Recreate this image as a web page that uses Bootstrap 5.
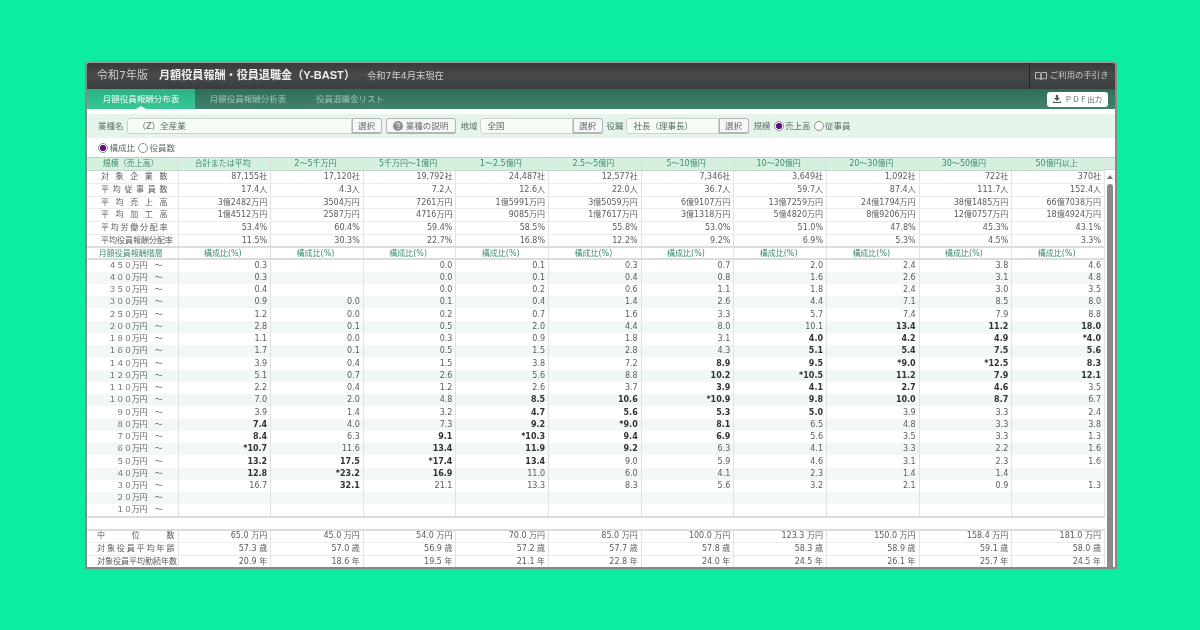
<!DOCTYPE html>
<html lang="ja">
<head>
<meta charset="utf-8">
<title>月額役員報酬・役員退職金（Y-BAST）</title>
<link href="https://cdn.jsdelivr.net/npm/bootstrap@5.3.0/dist/css/bootstrap.min.css" rel="stylesheet">
<style>
html,body{height:630px;overflow:hidden}
body{background:#0ceda3;font-family:"DejaVu Sans","Noto Sans CJK JP",sans-serif;font-size:8px;line-height:1;color:#555;padding:61px 0 0 85px}
.pane{width:1032px;height:508px;background:#fff;border:2px solid #888;border-top-color:#999;border-radius:4px 4px 0 0;overflow:hidden;filter:blur(.3px)}
.hdbar{height:26px;padding-bottom:1px;background:linear-gradient(#383b3d,#47494b 45%,#3a3d3f)}
.hd-a{font-size:11px;color:#c9cccc;margin-left:10px;width:62px}
.hd-b{font-size:11.1px;font-weight:700;color:#eceeee;width:208px;white-space:nowrap;font-family:"Liberation Sans","Noto Sans CJK JP",sans-serif}
.hd-c{font-size:9.3px;color:#c9cccc}
.guide{width:86px;height:26px;border-left:1px solid #222;color:#c3c6c6;font-size:8.4px;gap:3px;padding-left:5px;white-space:nowrap}
.tabbar{height:20px;background:linear-gradient(#2f6d58,#42836c)}
.tabbar .nav-link{height:20px;padding:1px 0 0;font-size:8.5px;color:#9fc2b3;display:flex;align-items:center;justify-content:center;position:relative}
.tabbar .tb1{width:108px;color:#f2fff9;background:linear-gradient(#2bb184,#38c896)}
.tabbar .tb1::after{content:"";position:absolute;left:50%;bottom:0;margin-left:-5px;border:5px solid transparent;border-top:0;border-bottom:3px solid #fff}
.tabbar .tb2{width:90px;margin-left:8px}
.tabbar .tb3{width:114px}
.pdf{margin-right:7px;width:61px;height:15px;padding:0;border-radius:3px;background:#fff;border:0;color:#5d6a64;font-size:7.4px;letter-spacing:.1px;line-height:15px;white-space:nowrap;display:flex;align-items:center;justify-content:center;gap:4px}
.filt{height:24px;margin-top:5px;background:#e6f5e9;padding-left:11px;color:#5a7064;font-size:8.5px}
.fld{height:16px;border-radius:3px 0 0 3px;border:1px solid #ccd3cd;background:#f6fbf6;font-size:8.5px;color:#56705f;padding:0 0 2px 10px;box-shadow:none}
.fld1{width:225px;margin:0 0 0 3px}
.fld2{width:93px;margin-left:2px;padding-left:7px}
.sel{height:16px;width:30px;padding:1px 0 0;border:1px solid #b4b4b4;border-bottom-width:2px;border-radius:0 3px 3px 0;background:#f7f7f7;color:#5f6b65;font-size:8.5px;line-height:1;white-space:nowrap}
.help{width:70px;margin:0 5px 0 4px;border-radius:3px;display:flex;align-items:center;justify-content:center;gap:3px}
.scale-lb{margin:0 3px 0 5px}
.rdo.form-check-input{width:10px;height:10px;margin:0 1.5px 0 0;border:1px solid #8c8c8c;background:#fff;flex:none}
.rdo.form-check-input:checked{background:radial-gradient(#6a0a86 0 2.8px,#fff 3.4px);border-color:#8c8c8c}
.rlabel{margin:0 3px 0 0;color:#5a7064;font-size:8.5px;white-space:nowrap}
.rowsel{height:19px;padding:1px 0 0 11px}
.gridwrap{width:1028px}
.table.rtbl{table-layout:fixed;width:1018px;border-collapse:collapse;font-size:8px;color:#5b5b5b;flex:none}
.table.rtbl>:not(caption)>*>*{padding:0 3px 0 0;border:0;border-right:1px solid #e2e2e2;text-align:right;box-shadow:none;background:transparent;color:inherit;white-space:nowrap;vertical-align:middle;line-height:1}
.table.rtbl>thead>tr{height:13px}
.table.rtbl>thead>tr>th{background:#d5f0de;color:#3f8d70;font-weight:400;text-align:center;border-top:1px solid #c9c9c9;border-bottom:1px solid #c3d4c8}
.table.rtbl th:first-child{width:91px}
.table.rtbl b{color:#333}
.table.rtbl>tbody.top>tr{height:12.83px}
.table.rtbl>tbody.top>tr>*{border-bottom:1px solid #ececec}
.table.rtbl>tbody>tr.hrow{height:12px}
.table.rtbl>tbody>tr.hrow>*{padding-top:1px;color:#3f8d70;text-align:center;border-top:2px solid #dcdcdc;border-bottom:2px solid #dcdcdc}
.table.rtbl>tbody.mid>tr{height:12.25px}
.table.rtbl>tbody.mid>tr:nth-child(even)>*{background:#f2f9f4}
.table.rtbl>tbody>tr.blank{height:13px}
.table.rtbl>tbody>tr.blank>*{border-right:0;border-top:2px solid #dcdcdc;border-bottom:2px solid #dcdcdc}
.table.rtbl>tbody.btm>tr{height:13px}
.table.rtbl>tbody.btm>tr>*{border-bottom:1px solid #ececec}
.table.rtbl>tbody.top>tr>.lab{padding:0 10px 0 14px;text-align:justify;text-align-last:justify}
.table.rtbl>tbody.mid>tr>.lab{padding:0 15px 0 0;text-align:right;letter-spacing:-.3px;color:#666}
.table.rtbl>tbody.btm>tr>.lab{padding:0 3px 0 10px;text-align:justify;text-align-last:justify}
.rail{width:10px;flex:none}
.rail-hd{height:13px;background:#d5f0de;border-top:1px solid #c9c9c9;border-bottom:1px solid #c3d4c8}
.rail-up{height:14px;display:flex;align-items:center;justify-content:center}
.rail-up::before{content:"";border:3px solid transparent;border-top:0;border-bottom:4px solid #777}
.rail-th{width:6px;height:384px;margin-left:2px;background:#8a8a8a;border-radius:3px 3px 0 0}
</style>
</head>
<body>
<div class="pane">
  <div class="hdbar d-flex align-items-center">
    <div class="hd-a">令和7年版</div>
    <div class="hd-b">月額役員報酬・役員退職金（Y-BAST）</div>
    <div class="hd-c flex-grow-1">令和7年4月末現在</div>
    <div class="guide d-flex align-items-center">
      <svg width="12" height="10" viewBox="0 0 12 10" fill="none" stroke="#b9bcbc" stroke-width="1"><path d="M.5 1.5h4.2c.7 0 1.3.5 1.3 1.2v6c0-.6-.6-1-1.3-1H.5zM11.5 1.5H7.3c-.7 0-1.3.5-1.3 1.2v6c0-.6.6-1 1.3-1h4.2z"/></svg>
      <span>ご利用の手引き</span>
    </div>
  </div>

  <div class="tabbar d-flex align-items-center">
    <ul class="nav flex-grow-1">
      <li class="nav-item"><a class="nav-link tb1" href="#">月額役員報酬分布表</a></li>
      <li class="nav-item"><a class="nav-link tb2" href="#">月額役員報酬分析表</a></li>
      <li class="nav-item"><a class="nav-link tb3" href="#">役員退職金リスト</a></li>
    </ul>
    <button type="button" class="btn pdf">
      <svg width="8" height="8" viewBox="0 0 9 9" fill="#4c5a54"><path d="M3.2 0h2.6v3.4H8L4.5 6.8 1 3.4h2.2zM0 7h1v1h7V7h1v2H0z"/></svg>
      <span>ＰＤＦ出力</span>
    </button>
  </div>

  <div class="filt d-flex align-items-center">
    <span>業種名</span>
    <input class="form-control fld fld1" type="text" value="（Z）全産業" aria-label="業種名">
    <button type="button" class="btn sel">選択</button>
    <button type="button" class="btn sel help">
      <svg width="10" height="10" viewBox="0 0 10 10"><circle cx="5" cy="5" r="5" fill="#8b8f8d"/><path d="M3.4 3.8c0-1 .7-1.6 1.7-1.6s1.6.6 1.6 1.4c0 1.2-1.4 1.2-1.4 2.4" fill="none" stroke="#fff" stroke-width="1"/><circle cx="5.2" cy="7.6" r=".7" fill="#fff"/></svg>
      <span>業種の説明</span>
    </button>
    <span>地域</span>
    <input class="form-control fld fld2" type="text" value="全国" aria-label="地域">
    <button type="button" class="btn sel">選択</button>
    <span class="ms-1">役職</span>
    <input class="form-control fld fld2" type="text" value="社長（理事長）" aria-label="役職">
    <button type="button" class="btn sel">選択</button>
    <span class="scale-lb">規模</span>
    <input class="form-check-input rdo" type="radio" name="scale" id="s1" checked>
    <label class="rlabel" for="s1">売上高</label>
    <input class="form-check-input rdo" type="radio" name="scale" id="s2">
    <label class="rlabel" for="s2">従事員</label>
  </div>

  <div class="rowsel d-flex align-items-center">
    <input class="form-check-input rdo" type="radio" name="unit" id="u1" checked>
    <label class="rlabel" for="u1">構成比</label>
    <input class="form-check-input rdo" type="radio" name="unit" id="u2">
    <label class="rlabel" for="u2">役員数</label>
  </div>

  <div class="gridwrap d-flex align-items-start">
    <table class="table rtbl mb-0">
      <thead>
        <tr><th>規模（売上高）</th><th>合計または平均</th><th>2～5千万円</th><th>5千万円～1億円</th><th>1～2.5億円</th><th>2.5～5億円</th><th>5～10億円</th><th>10～20億円</th><th>20～30億円</th><th>30～50億円</th><th>50億円以上</th></tr>
      </thead>
      <tbody class="top">
        <tr><td class="lab">対象企業数</td><td>87,155社</td><td>17,120社</td><td>19,792社</td><td>24,487社</td><td>12,577社</td><td>7,346社</td><td>3,649社</td><td>1,092社</td><td>722社</td><td>370社</td></tr>
        <tr><td class="lab">平均従事員数</td><td>17.4人</td><td>4.3人</td><td>7.2人</td><td>12.6人</td><td>22.0人</td><td>36.7人</td><td>59.7人</td><td>87.4人</td><td>111.7人</td><td>152.4人</td></tr>
        <tr><td class="lab">平均売上高</td><td>3億2482万円</td><td>3504万円</td><td>7261万円</td><td>1億5991万円</td><td>3億5059万円</td><td>6億9107万円</td><td>13億7259万円</td><td>24億1794万円</td><td>38億1485万円</td><td>66億7038万円</td></tr>
        <tr><td class="lab">平均加工高</td><td>1億4512万円</td><td>2587万円</td><td>4716万円</td><td>9085万円</td><td>1億7617万円</td><td>3億1318万円</td><td>5億4820万円</td><td>8億9206万円</td><td>12億0757万円</td><td>18億4924万円</td></tr>
        <tr><td class="lab">平均労働分配率</td><td>53.4%</td><td>60.4%</td><td>59.4%</td><td>58.5%</td><td>55.8%</td><td>53.0%</td><td>51.0%</td><td>47.8%</td><td>45.3%</td><td>43.1%</td></tr>
        <tr><td class="lab">平均役員報酬分配率</td><td>11.5%</td><td>30.3%</td><td>22.7%</td><td>16.8%</td><td>12.2%</td><td>9.2%</td><td>6.9%</td><td>5.3%</td><td>4.5%</td><td>3.3%</td></tr>
      </tbody>
      <tbody>
        <tr class="hrow"><td>月額役員報酬階層</td><td>構成比(%)</td><td>構成比(%)</td><td>構成比(%)</td><td>構成比(%)</td><td>構成比(%)</td><td>構成比(%)</td><td>構成比(%)</td><td>構成比(%)</td><td>構成比(%)</td><td>構成比(%)</td></tr>
      </tbody>
      <tbody class="mid">
        <tr><td class="lab">４５０万円　～</td><td>0.3</td><td></td><td>0.0</td><td>0.1</td><td>0.3</td><td>0.7</td><td>2.0</td><td>2.4</td><td>3.8</td><td>4.6</td></tr>
        <tr><td class="lab">４００万円　～</td><td>0.3</td><td></td><td>0.0</td><td>0.1</td><td>0.4</td><td>0.8</td><td>1.6</td><td>2.6</td><td>3.1</td><td>4.8</td></tr>
        <tr><td class="lab">３５０万円　～</td><td>0.4</td><td></td><td>0.0</td><td>0.2</td><td>0.6</td><td>1.1</td><td>1.8</td><td>2.4</td><td>3.0</td><td>3.5</td></tr>
        <tr><td class="lab">３００万円　～</td><td>0.9</td><td>0.0</td><td>0.1</td><td>0.4</td><td>1.4</td><td>2.6</td><td>4.4</td><td>7.1</td><td>8.5</td><td>8.0</td></tr>
        <tr><td class="lab">２５０万円　～</td><td>1.2</td><td>0.0</td><td>0.2</td><td>0.7</td><td>1.6</td><td>3.3</td><td>5.7</td><td>7.4</td><td>7.9</td><td>8.8</td></tr>
        <tr><td class="lab">２００万円　～</td><td>2.8</td><td>0.1</td><td>0.5</td><td>2.0</td><td>4.4</td><td>8.0</td><td>10.1</td><td><b>13.4</b></td><td><b>11.2</b></td><td><b>18.0</b></td></tr>
        <tr><td class="lab">１８０万円　～</td><td>1.1</td><td>0.0</td><td>0.3</td><td>0.9</td><td>1.8</td><td>3.1</td><td><b>4.0</b></td><td><b>4.2</b></td><td><b>4.9</b></td><td><b>*4.0</b></td></tr>
        <tr><td class="lab">１６０万円　～</td><td>1.7</td><td>0.1</td><td>0.5</td><td>1.5</td><td>2.8</td><td>4.3</td><td><b>5.1</b></td><td><b>5.4</b></td><td><b>7.5</b></td><td><b>5.6</b></td></tr>
        <tr><td class="lab">１４０万円　～</td><td>3.9</td><td>0.4</td><td>1.5</td><td>3.8</td><td>7.2</td><td><b>8.9</b></td><td><b>9.5</b></td><td><b>*9.0</b></td><td><b>*12.5</b></td><td><b>8.3</b></td></tr>
        <tr><td class="lab">１２０万円　～</td><td>5.1</td><td>0.7</td><td>2.6</td><td>5.6</td><td>8.8</td><td><b>10.2</b></td><td><b>*10.5</b></td><td><b>11.2</b></td><td><b>7.9</b></td><td><b>12.1</b></td></tr>
        <tr><td class="lab">１１０万円　～</td><td>2.2</td><td>0.4</td><td>1.2</td><td>2.6</td><td>3.7</td><td><b>3.9</b></td><td><b>4.1</b></td><td><b>2.7</b></td><td><b>4.6</b></td><td>3.5</td></tr>
        <tr><td class="lab">１００万円　～</td><td>7.0</td><td>2.0</td><td>4.8</td><td><b>8.5</b></td><td><b>10.6</b></td><td><b>*10.9</b></td><td><b>9.8</b></td><td><b>10.0</b></td><td><b>8.7</b></td><td>6.7</td></tr>
        <tr><td class="lab">９０万円　～</td><td>3.9</td><td>1.4</td><td>3.2</td><td><b>4.7</b></td><td><b>5.6</b></td><td><b>5.3</b></td><td><b>5.0</b></td><td>3.9</td><td>3.3</td><td>2.4</td></tr>
        <tr><td class="lab">８０万円　～</td><td><b>7.4</b></td><td>4.0</td><td>7.3</td><td><b>9.2</b></td><td><b>*9.0</b></td><td><b>8.1</b></td><td>6.5</td><td>4.8</td><td>3.3</td><td>3.8</td></tr>
        <tr><td class="lab">７０万円　～</td><td><b>8.4</b></td><td>6.3</td><td><b>9.1</b></td><td><b>*10.3</b></td><td><b>9.4</b></td><td><b>6.9</b></td><td>5.6</td><td>3.5</td><td>3.3</td><td>1.3</td></tr>
        <tr><td class="lab">６０万円　～</td><td><b>*10.7</b></td><td>11.6</td><td><b>13.4</b></td><td><b>11.9</b></td><td><b>9.2</b></td><td>6.3</td><td>4.1</td><td>3.3</td><td>2.2</td><td>1.6</td></tr>
        <tr><td class="lab">５０万円　～</td><td><b>13.2</b></td><td><b>17.5</b></td><td><b>*17.4</b></td><td><b>13.4</b></td><td>9.0</td><td>5.9</td><td>4.6</td><td>3.1</td><td>2.3</td><td>1.6</td></tr>
        <tr><td class="lab">４０万円　～</td><td><b>12.8</b></td><td><b>*23.2</b></td><td><b>16.9</b></td><td>11.0</td><td>6.0</td><td>4.1</td><td>2.3</td><td>1.4</td><td>1.4</td><td></td></tr>
        <tr><td class="lab">３０万円　～</td><td>16.7</td><td><b>32.1</b></td><td>21.1</td><td>13.3</td><td>8.3</td><td>5.6</td><td>3.2</td><td>2.1</td><td>0.9</td><td>1.3</td></tr>
        <tr><td class="lab">２０万円　～</td><td></td><td></td><td></td><td></td><td></td><td></td><td></td><td></td><td></td><td></td></tr>
        <tr><td class="lab">１０万円　～</td><td></td><td></td><td></td><td></td><td></td><td></td><td></td><td></td><td></td><td></td></tr>
      </tbody>
      <tbody>
        <tr class="blank"><td colspan="11"></td></tr>
      </tbody>
      <tbody class="btm">
        <tr><td class="lab">中　位　数</td><td>65.0 万円</td><td>45.0 万円</td><td>54.0 万円</td><td>70.0 万円</td><td>85.0 万円</td><td>100.0 万円</td><td>123.3 万円</td><td>150.0 万円</td><td>158.4 万円</td><td>181.0 万円</td></tr>
        <tr><td class="lab">対象役員平均年齢</td><td>57.3 歳</td><td>57.0 歳</td><td>56.9 歳</td><td>57.2 歳</td><td>57.7 歳</td><td>57.8 歳</td><td>58.3 歳</td><td>58.9 歳</td><td>59.1 歳</td><td>58.0 歳</td></tr>
        <tr><td class="lab">対象役員平均勤続年数</td><td>20.9 年</td><td>18.6 年</td><td>19.5 年</td><td>21.1 年</td><td>22.8 年</td><td>24.0 年</td><td>24.5 年</td><td>26.1 年</td><td>25.7 年</td><td>24.5 年</td></tr>
      </tbody>
    </table>
    <div class="rail">
      <div class="rail-hd"></div>
      <div class="rail-up"></div>
      <div class="rail-th"></div>
    </div>
  </div>
</div>
<script src="https://cdn.jsdelivr.net/npm/bootstrap@5.3.0/dist/js/bootstrap.bundle.min.js"></script>
</body>
</html>
